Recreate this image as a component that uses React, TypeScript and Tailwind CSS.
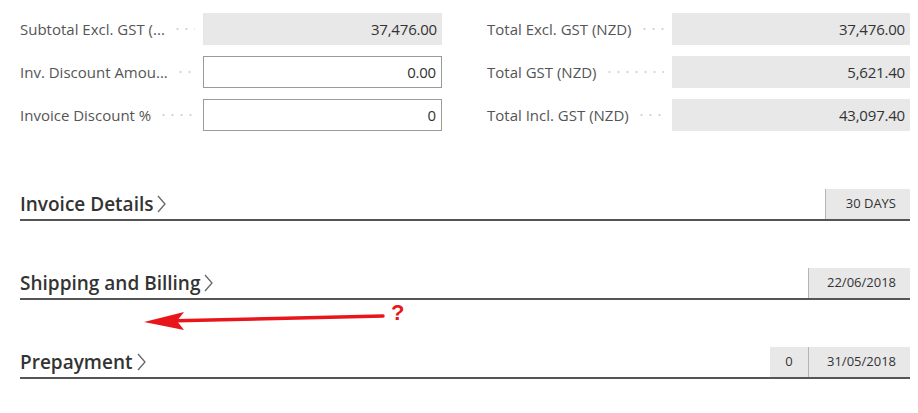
import React from "react";

const font = { fontFamily: '"Open Sans", "Noto Sans", "Liberation Sans", sans-serif' };

function Dots() {
  return (
    <div className="flex-1 h-[4px] ml-[8px] bg-[radial-gradient(circle,#d2d2d2_1px,transparent_1.2px)] bg-[length:9px_4px] bg-repeat-x" />
  );
}

function Field({ label, value, kind, labelW }: { label: string; value: string; kind: "ro" | "input"; labelW: string }) {
  return (
    <div className="flex items-center h-[32px]">
      <div className={`${labelW} flex items-center pr-[8px] shrink-0`}>
        <span className="text-[15px] text-[#555] whitespace-nowrap">{label}</span>
        <Dots />
      </div>
      {kind === "ro" ? (
        <div className="flex-1 h-full bg-[#e8e8e8] flex items-center justify-end pr-[5px] text-[15px] tracking-[-0.2px] text-[#333]">{value}</div>
      ) : (
        <div className="flex-1 h-full bg-white border border-[#9a9a9a] flex items-center justify-end pr-[5px] text-[15px] tracking-[-0.2px] text-[#333]">{value}</div>
      )}
    </div>
  );
}

function Chevron() {
  return (
    <svg width="11" height="20" viewBox="0 0 11 20" className="ml-[3px]">
      <path d="M2 2 L9 10 L2 18" fill="none" stroke="#666" strokeWidth="1.3" />
    </svg>
  );
}

function Section({ title, boxes }: { title: string; boxes: { text: string; cls: string }[] }) {
  return (
    <div className="flex items-stretch h-[32px] border-b-[2px] border-[#555]">
      <div className="flex items-center flex-1">
        <span className="text-[19px] font-semibold text-[#333] whitespace-nowrap">{title}</span>
        <Chevron />
      </div>
      {boxes.map((b, i) => (
        <div key={i} className={`h-full bg-[#e8e8e8] border-l border-[#b5b5b5] flex items-center text-[13px] text-[#333] ${b.cls}`}>
          {b.text}
        </div>
      ))}
    </div>
  );
}

export default function App() {
  return (
    <div style={font} className="relative w-[918px] h-[413px] bg-white overflow-hidden">
      <div className="flex pt-[13px] pl-[20px] pr-[8px]">
        <div className="w-[422px] flex flex-col gap-[11px]">
          <Field labelW="w-[183px]" label="Subtotal Excl. GST (..." value="37,476.00" kind="ro" />
          <Field labelW="w-[183px]" label="Inv. Discount Amou..." value="0.00" kind="input" />
          <Field labelW="w-[183px]" label="Invoice Discount %" value="0" kind="input" />
        </div>
        <div className="ml-[45px] flex-1 flex flex-col gap-[11px]">
          <Field labelW="w-[185px]" label="Total Excl. GST (NZD)" value="37,476.00" kind="ro" />
          <Field labelW="w-[185px]" label="Total GST (NZD)" value="5,621.40" kind="ro" />
          <Field labelW="w-[185px]" label="Total Incl. GST (NZD)" value="43,097.40" kind="ro" />
        </div>
      </div>

      <div className="pl-[20px] pr-[8px] mt-[58px] flex flex-col gap-[47px]">
        <Section title="Invoice Details" boxes={[{ text: "30 DAYS", cls: "w-[85px] justify-end pr-[14px]" }]} />
        <Section title="Shipping and Billing" boxes={[{ text: "22/06/2018", cls: "w-[102px] justify-end pr-[14px]" }]} />
        <Section
          title="Prepayment"
          boxes={[
            { text: "0", cls: "w-[38px] justify-center border-l-0" },
            { text: "31/05/2018", cls: "w-[102px] justify-end pr-[14px]" },
          ]}
        />
      </div>

      <svg className="absolute left-0 top-0 pointer-events-none" width="918" height="413">
        <path d="M165 321 L383 316" stroke="#e8161b" strokeWidth="3.5" strokeLinecap="round" fill="none" />
        <path d="M144 322 L184 312 L177 321 L184 330 Z" fill="#e8161b" />
      </svg>
      <span className="absolute left-[391px] top-[302px] text-[22px] font-bold text-[#e8161b] leading-none" style={{ fontFamily: '"Liberation Sans", Arial, sans-serif' }}>?</span>
    </div>
  );
}
